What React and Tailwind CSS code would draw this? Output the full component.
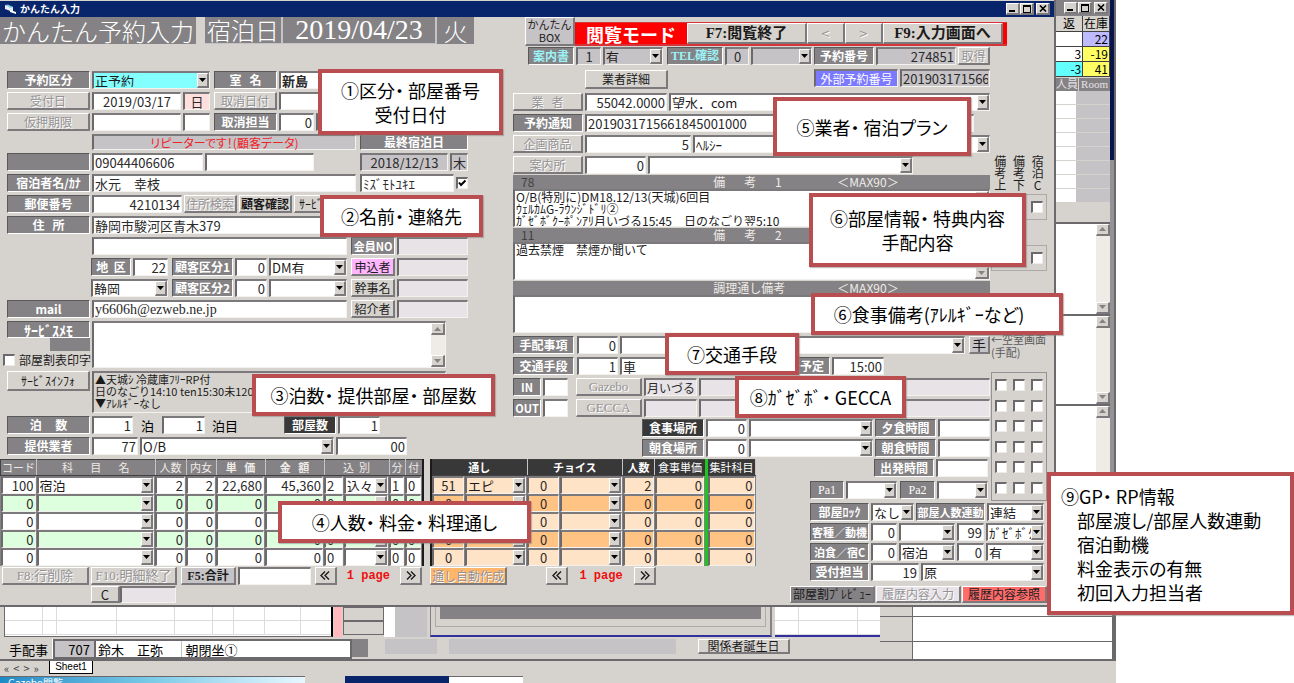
import React from "react";

const inset =
  "border-t-2 border-l-2 border-b border-r border-t-[#7b797b] border-l-[#6b696b] border-b-[#f4f2ee] border-r-[#f4f2ee]";
const raised =
  "border-t border-l border-b-2 border-r-2 border-t-white border-l-white border-b-[#7b797b] border-r-[#7b797b]";
const serif = "[font-family:'Liberation_Serif','Noto_Sans_CJK_JP',serif]";

/* Heading cell; becomes a real label when it names a field. */
function L({ children, className = "", dark, tone = "text-white", size = "text-xs", htmlFor }) {
  const cls = `flex shrink-0 items-center justify-center overflow-hidden whitespace-pre border-t border-l border-b border-r border-t-[#5a595a] border-l-[#5a595a] border-b-white border-r-white ${size} leading-none font-bold ${dark ? "bg-[#393839]" : "bg-[#848284]"} ${tone} ${className}`;
  return htmlFor ? (
    <label htmlFor={htmlFor} className={cls}>{children}</label>
  ) : (
    <div className={cls}>{children}</div>
  );
}

function F({ v = "", className = "", right, bg = "bg-white", size = "text-[13px]", id, name }) {
  return (
    <input
      id={id}
      aria-label={name}
      defaultValue={v}
      className={`h-full min-w-0 rounded-none px-px ${size} leading-none text-[#2b2a2b] outline-none ${inset} ${bg} ${right ? "text-right" : ""} ${className}`}
    />
  );
}

function Tri({ up, tone = "fill-black" }) {
  return (
    <svg viewBox="0 0 7 4" className={`h-1 w-[7px] ${tone}`} aria-hidden="true">
      <polygon points={up ? "0,4 7,4 3.5,0" : "0,0 7,0 3.5,4"} />
    </svg>
  );
}

function S({ v = "", className = "", bg = "bg-white", id, name }) {
  return (
    <div className={`relative h-full min-w-0 ${inset} ${bg} ${className}`}>
      <select
        id={id}
        aria-label={name}
        className="block h-full w-full appearance-none rounded-none bg-transparent pr-3 pl-px text-[13px] leading-none text-[#1c1b1c] outline-none"
      >
        <option>{v}</option>
      </select>
      <span className={`pointer-events-none absolute inset-y-0 right-0 flex w-3 items-center justify-center bg-[#d6d3ce] ${raised}`}>
        <span className="flex shrink-0"><Tri /></span>
      </span>
    </div>
  );
}

function B({ children, className = "", off, bg = "bg-[#d6d3ce]", size = "text-xs", name }) {
  return (
    <button
      type="button"
      aria-label={name}
      className={`flex shrink-0 items-center justify-center overflow-hidden whitespace-pre leading-none ${size} ${raised} ${bg} ${off ? "text-[#949294] [text-shadow:1px_1px_0_#fff]" : "text-[#1c1b1c]"} ${className}`}
    >
      {children}
    </button>
  );
}

function Check({ name, checked }) {
  return (
    <span className="relative flex h-3 w-3 shrink-0">
      <input
        type="checkbox"
        aria-label={name}
        defaultChecked={checked}
        className="h-3 w-3 appearance-none border-t-2 border-l-2 border-r border-b border-t-[#6b696b] border-l-[#6b696b] border-r-[#efece7] border-b-[#efece7] bg-white"
      />
      {checked && (
        <svg viewBox="0 0 12 12" className="pointer-events-none absolute inset-0" aria-hidden="true">
          <path d="M3 5.5 L5 8 L9.5 3.5" fill="none" stroke="#000" strokeWidth="2" />
        </svg>
      )}
    </span>
  );
}

function Row({ children, className = "" }) {
  return <div className={`flex h-[18px] gap-[2px] ${className}`}>{children}</div>;
}

function Memo({ v = "", className = "", bg = "bg-white", size = "text-xs", name, id, bar }) {
  return (
    <div className={`flex ${inset} ${bg} ${className}`}>
      <textarea
        id={id}
        aria-label={name}
        defaultValue={v}
        className={`block h-full min-w-0 flex-1 resize-none overflow-hidden bg-transparent px-px ${size} leading-3 whitespace-pre text-[#1c1b1c] outline-none`}
      />
      {bar && <Scroll />}
    </div>
  );
}

function Scroll() {
  return (
    <div className="flex w-[14px] shrink-0 flex-col justify-between bg-[#efebe7]">
      <B name="上へ" className="h-3 w-[14px]"><Tri up tone="fill-[#848284]" /></B>
      <B name="下へ" className="h-3 w-[14px]"><Tri tone="fill-[#848284]" /></B>
    </div>
  );
}

function WinButtons() {
  return (
    <div className="flex items-center">
      <button type="button" aria-label="最小化" className={`flex h-3 w-[14px] items-end bg-[#d6d3ce] p-px ${raised}`}>
        <span className="ml-px h-[2px] w-[6px] bg-black" />
      </button>
      <button type="button" aria-label="最大化" className={`flex h-3 w-[14px] items-center justify-center bg-[#d6d3ce] ${raised}`}>
        <span className="h-2 w-2 border border-t-2 border-black" />
      </button>
      <button type="button" aria-label="閉じる" className={`ml-[2px] flex h-3 w-[14px] items-center justify-center bg-[#d6d3ce] ${raised}`}>
        <svg viewBox="0 0 8 7" className="h-[7px] w-2 shrink-0" aria-hidden="true">
          <path d="M1 0.5 L7 6.5 M7 0.5 L1 6.5" stroke="#000" strokeWidth="1.6" />
        </svg>
      </button>
    </div>
  );
}

function Callout({ children, className = "" }) {
  return (
    <div className={`absolute flex flex-col items-center justify-center border-4 border-[#b94d4f] bg-white text-lg leading-6 whitespace-pre text-black shadow-[1px_1px_1px_#8888] [font-feature-settings:'palt'] ${className}`}>
      {children}
    </div>
  );
}

function LeftColumn() {
  return (
    <section className="flex min-w-0 flex-[510] flex-col">
      <div className="flex h-[27px] text-2xl leading-none font-light text-white">
        <h1 className="flex w-[196px] items-center justify-center bg-[#848284]">かんたん予約入力</h1>
        <div className="ml-[9px] flex w-[78px] items-center justify-center border-r-2 border-b border-[#c6c3c6] bg-[#848284]">宿泊日</div>
        <div className={`flex w-[154px] items-center justify-center border-r-2 border-b border-[#c6c3c6] bg-[#848284] ${serif} text-[28px]`}>2019/04/23</div>
        <div className="flex w-[37px] items-center justify-center bg-[#848284]">火</div>
      </div>

      <div className="mt-[27px] ml-[7px] flex flex-col gap-[3px] pr-[42px]">
        <Row>
          <L htmlFor="kubun" className="w-[83px]">予約区分</L>
          <S id="kubun" v="正予約" bg="bg-[#84ffff]" className="w-[118px]" />
          <L htmlFor="room" className="ml-[2px] w-[63px]">室   名</L>
          <F id="room" v="新島" className="flex-1 font-bold" />
        </Row>
        <Row>
          <B off className="w-[83px]">受付日</B>
          <F name="受付日" v="2019/03/17" className="w-[89px] text-center" />
          <F name="曜日" v="日" bg="bg-[#ffdfde]" className="w-[27px] text-center" />
          <B off className="ml-[2px] w-[63px]">取消日付</B>
          <F name="取消日付" className="flex-1" />
        </Row>
        <Row>
          <B off className="w-[83px]">仮押期限</B>
          <F name="仮押期限" className="w-[89px]" />
          <F name="仮押曜日" className="w-[27px]" />
          <L htmlFor="cancel" className="ml-[2px] w-[63px]">取消担当</L>
          <F id="cancel" v="0" right className="w-[35px]" />
          <F name="取消担当名" className="flex-1" />
        </Row>
        <div className="flex h-4 items-stretch">
          <div className={`ml-[85px] flex flex-1 items-center justify-center bg-[#c6c3c6] text-xs leading-none text-[#ef2429] [font-feature-settings:'palt'] ${inset}`}>リピーターです！(顧客データ)</div>
          <L className="ml-1 w-[108px]">最終宿泊日</L>
        </div>
        <Row>
          <L className="w-[83px]" />
          <F name="電話番号" v="09044406606" className="w-[111px]" />
          <F name="電話番号2" className="w-[109px]" />
          <div className="flex-1" />
          <F name="最終宿泊日" v="2018/12/13" bg="bg-[#c6c3c6]" className="w-[88px] text-center" />
          <F name="最終曜日" v="木" bg="bg-[#c6c3c6]" className="w-[18px]" />
        </Row>
        <Row>
          <L htmlFor="guest" className="w-[83px]">宿泊者名/ｶﾅ</L>
          <F id="guest" v="水元　幸枝" className="flex-1" />
          <F name="カナ" v="ﾐｽﾞﾓﾄﾕｷｴ" className="ml-[2px] w-[94px]" />
          <div className="flex w-3 items-center"><Check name="カナ確認" checked /></div>
        </Row>
        <Row>
          <L htmlFor="zip" className="w-[83px]">郵便番号</L>
          <F id="zip" v="4210134" right className="w-[90px]" />
          <B off className="w-[53px]">住所検索</B>
          <B className="w-[53px] font-bold">顧客確認</B>
          <B className="w-[53px] justify-start pl-1">ｻｰﾋﾞｽ</B>
        </Row>
        <Row>
          <L htmlFor="addr" className="w-[83px]">住   所</L>
          <F id="addr" v="静岡市駿河区青木379" className="flex-1" />
        </Row>
        <Row>
          <F name="住所2" className="ml-[85px] flex-1" />
          <L htmlFor="member" size="text-[11px]" className="ml-[2px] w-[44px]">会員NO</L>
          <F id="member" bg="bg-[#e7e3e7]" className="w-[71px]" />
        </Row>
        <Row>
          <L htmlFor="area" className="ml-[84px] w-[40px]">地  区</L>
          <F id="area" v="22" right className="w-[35px]" />
          <L htmlFor="cls1" className="ml-[2px] w-[61px]">顧客区分1</L>
          <F id="cls1" v="0" right className="w-[32px]" />
          <S name="顧客区分1名" v="DM有" className="flex-1" />
          <B bg="bg-[#ffb6ff]" className="ml-[2px] w-[44px]">申込者</B>
          <F name="申込者" bg="bg-[#e7e3e7]" className="w-[71px]" />
        </Row>
        <Row>
          <S name="地区名" v="静岡" className="ml-[84px] w-[77px]" />
          <L htmlFor="cls2" className="ml-[2px] w-[61px]">顧客区分2</L>
          <F id="cls2" v="0" right className="w-[32px]" />
          <S name="顧客区分2名" className="flex-1" />
          <B className="ml-[2px] w-[44px]">幹事名</B>
          <F name="幹事名" bg="bg-[#e7e3e7]" className="w-[71px]" />
        </Row>
        <Row>
          <L htmlFor="mail" className="w-[83px]">mail</L>
          <F id="mail" v="y6606h@ezweb.ne.jp" size="text-sm" className={`flex-1 ${serif}`} />
          <B className="ml-[2px] w-[44px]">紹介者</B>
          <F name="紹介者" bg="bg-[#e7e3e7]" className="w-[71px]" />
        </Row>
        <div className="mr-[22px] flex h-[47px] gap-[2px]">
          <div className="-ml-1 flex w-[87px] flex-col">
            <L htmlFor="smemo" size="text-sm" className="ml-1 h-[17px]">ｻｰﾋﾞｽﾒﾓ</L>
            <div className="ml-auto h-[13px] w-[40px] bg-[#848284]" />
            <label className="flex h-[17px] items-center gap-1 text-xs leading-none whitespace-nowrap text-[#1c1b1c]">
              <Check name="部屋割表印字" />
              <span>部屋割表印字</span>
            </label>
          </div>
          <Memo id="smemo" bar className="flex-1" />
        </div>
        <div className="mr-[22px] flex h-[42px] gap-[2px]">
          <B className="h-5 w-[83px]">ｻｰﾋﾞｽｲﾝﾌｫ</B>
          <Memo name="サービスインフォ" bg="bg-[#d6d3ce]" size="text-[11px]" className="flex-1" v={"▲天城ｼ 冷蔵庫ﾌﾘｰRP付\n日のなごり14:10 ten15:30未120分\n▼ｱﾚﾙｷﾞｰなし"} />
        </div>
        <Row>
          <L htmlFor="nights" className="w-[83px]">泊     数</L>
          <F id="nights" v="1" right className="w-[41px]" />
          <span className="w-[25px] self-center text-center text-[13px] leading-none">泊</span>
          <F name="泊目" v="1" right className="w-[43px]" />
          <span className="w-[36px] self-center text-center text-[13px] leading-none">泊目</span>
          <div className="flex-1" />
          <L htmlFor="rooms" dark className="w-[52px]">部屋数</L>
          <F id="rooms" v="1" right className="mr-[88px] w-[42px]" />
        </Row>
        <Row className="mr-[61px]">
          <L htmlFor="vendor" className="w-[83px]">提供業者</L>
          <F id="vendor" v="77" right className="w-[46px]" />
          <S name="提供業者名" v="O/B" className="flex-1" />
          <F name="業者枝番" v="00" right className="w-[71px]" />
        </Row>
      </div>
    </section>
  );
}

function CheckTriple({ label }) {
  return (
    <div className="flex justify-around">
      <Check name={`${label} 備考上`} />
      <Check name={`${label} 備考下`} />
      <Check name={`${label} 宿泊C`} />
    </div>
  );
}

function RemarkBar({ count, title, max, className = "" }) {
  return (
    <div className={`flex h-[14px] items-center bg-[#848284] text-xs leading-none text-[#efebe7] ${className}`}>
      <span className="w-[42%] pl-2 text-[#424142]">{count}</span>
      <span className="w-[26%] whitespace-pre">{title}</span>
      {max && <span>＜MAX90＞</span>}
    </div>
  );
}

function RightColumn() {
  return (
    <section className="flex min-w-0 flex-[537] flex-col">
      <div className="flex h-[30px] pl-3">
        <button type="button" className={`h-[29px] w-[50px] shrink-0 bg-[#c6c3c6] text-center text-[11px] leading-[13px] whitespace-nowrap text-[#1c1b1c] ${raised}`}>
          かんたん<br />BOX
        </button>
        <div className="mt-[5px] mr-[43px] flex h-[24px] flex-1 border-t border-b-2 border-[#d63439] bg-[#ff0000] pr-1">
          <div className="flex w-[112px] items-center justify-center text-lg leading-none font-bold text-white">閲覧モード</div>
          <B className={`min-w-0 flex-1 font-bold ${serif}`} size="text-[15px]">F7:閲覧終了</B>
          <B off size="text-sm" className="w-[38px]">&lt;</B>
          <B off size="text-sm" className="w-[38px]">&gt;</B>
          <B className={`min-w-0 flex-1 font-bold ${serif}`} size="text-[15px]">F9:入力画面へ</B>
        </div>
      </div>
      <Row className="mr-[60px] pl-[15px]">
        <L htmlFor="guide" tone="text-[#9cf3f7]" className="w-[46px]">案内書</L>
        <F id="guide" v="1" bg="bg-[#c6c3c6]" className="w-[25px] text-center" />
        <S name="案内書有無" v="有" bg="bg-[#c6c3c6]" className="w-[60px]" />
        <L htmlFor="tel" tone="text-[#9cf3f7]" className={`ml-[2px] w-[56px] ${serif}`}>TEL確認</L>
        <F id="tel" v="0" bg="bg-[#c6c3c6]" className="w-[24px] text-center" />
        <S name="TEL確認状況" bg="bg-[#c6c3c6]" className="w-[61px]" />
        <L htmlFor="rsv" className="w-[60px]">予約番号</L>
        <F id="rsv" v="274851" right bg="bg-[#c6c3c6]" className="flex-1" />
        <B off className="w-[32px]">取得</B>
      </Row>
      <div className="mr-[60px] mt-1 flex h-[20px] pl-[72px]">
        <B className="h-[19px] w-[83px] self-end">業者詳細</B>
        <div className="flex-1" />
        <label htmlFor="ext" className={`mr-[2px] flex h-[18px] w-[84px] items-center justify-center bg-[#7b79ff] text-xs leading-none text-white ${inset}`}>外部予約番号</label>
        <div className="h-[18px] w-[90px]"><F id="ext" v="201903171566184" bg="bg-[#c6c3c6]" className="block w-full" /></div>
      </div>

      <div className="mt-[4px] flex">
        <div className="flex min-w-0 flex-1 flex-col">
          <div className="flex flex-col gap-[3px]">
            <Row>
              <B off className="w-[70px]">業   者</B>
              <F name="業者番号" v="55042.0000" right className="w-[82px]" />
              <S name="業者名" v="望水．com" className="flex-1" />
            </Row>
            <Row className="mr-[16px]">
              <L htmlFor="notice" className="w-[70px]">予約通知</L>
              <F id="notice" v="2019031715661845001000" className="flex-1" />
            </Row>
            <Row>
              <B off className="w-[70px]">企画商品</B>
              <F name="企画商品番号" v="5" right className="w-[106px]" />
              <S name="企画商品名" v="ﾍﾙｼｰ" className="flex-1" />
            </Row>
            <Row className="mr-[77px]">
              <B off className="w-[70px]">案内所</B>
              <F name="案内所番号" v="0" right className="w-[61px]" />
              <S name="案内所名" className="flex-1" />
            </Row>
          </div>
          <RemarkBar max className="mt-px" count="78" title="備       考       1" />
          <Memo name="備考1" bar className="h-[38px]" v={"O/B(特別に)DM18.12/13(天城)6回目\nｳｪﾙｶﾑG-ﾗｳﾝｼﾞﾄﾞﾘ②\nｶﾞｾﾞﾎﾞｸｰﾎﾟﾝｱﾘ月いづる15:45　日のなごり翌5:10"} />
          <RemarkBar className="mt-px" count="11" title="備       考       2" />
          <Memo name="備考2" bar className="h-[38px]" v="過去禁煙　禁煙か聞いて" />
          <RemarkBar max className="mt-px" title="調理通し備考" />
          <Memo name="調理通し備考" className="h-[38px]" />
          <div className="mt-[3px] flex flex-col gap-[3px]">
            <Row>
              <L htmlFor="arr" className="w-[61px]">手配事項</L>
              <F id="arr" v="0" right className="ml-px w-[41px]" />
              <S name="手配事項名" className="flex-1" />
              <B bg="bg-[#c6c3c6]" size="text-sm" className="ml-[2px] w-[21px]">手</B>
            </Row>
            <Row>
              <L htmlFor="trans" className="w-[61px]">交通手段</L>
              <F id="trans" v="1" right className="ml-px w-[41px]" />
              <F name="交通手段名" v="車" className="flex-1" />
              <L htmlFor="eta" className="w-[60px]">到着予定</L>
              <F id="eta" v="15:00" right className="mr-[106px] w-[52px]" />
            </Row>
            <Row>
              <L htmlFor="in" size="text-[11px]" className="w-[28px]">IN</L>
              <F id="in" className="w-[25px]" />
              <B off size="text-[13px]" className={`ml-[6px] w-[66px] ${serif}`}>Gazebo</B>
              <F name="Gazebo" v="月いづる" size="text-xs" bg="bg-[#e7e3e7]" className="w-[53px]" />
              <F name="Gazebo2" bg="bg-[#e7e3e7]" className="flex-1" />
            </Row>
            <Row>
              <L htmlFor="out" size="text-[11px]" className="w-[28px]">OUT</L>
              <F id="out" className="w-[25px]" />
              <B off size="text-[13px]" className={`ml-[6px] w-[66px] ${serif}`}>GECCA</B>
              <F name="GECCA" bg="bg-[#e7e3e7]" className="w-[53px]" />
              <F name="GECCA2" bg="bg-[#e7e3e7]" className="flex-1" />
            </Row>
          </div>
          <div className="mt-[2px] flex flex-col gap-[2px] pl-[129px]">
            <Row>
              <L htmlFor="din" dark className="w-[62px]">食事場所</L>
              <F id="din" v="0" right className="w-[41px]" />
              <S name="食事場所名" className="flex-1" />
              <L htmlFor="dint" className="w-[61px]">夕食時間</L>
              <F id="dint" className="w-[52px]" />
            </Row>
            <Row>
              <L htmlFor="bf" className="w-[62px]">朝食場所</L>
              <F id="bf" v="0" right className="w-[41px]" />
              <S name="朝食場所名" className="flex-1" />
              <L htmlFor="bft" className="w-[61px]">朝食時間</L>
              <F id="bft" className="w-[52px]" />
            </Row>
          </div>
        </div>

        <aside className="-mb-12 ml-px flex w-[59px] flex-col pr-[3px] text-[#1c1b1c]">
          <div className="mt-[62px] flex h-[36px] justify-around text-xs leading-3">
            <span className="w-3">備考上</span>
            <span className="w-3">備考下</span>
            <span className="w-3 text-center">宿泊C</span>
          </div>
          <div className="mt-[3px] flex h-[26px] flex-col justify-center border border-[#adaaa5]"><CheckTriple label="備考1" /></div>
          <div className="mt-[25px] flex h-[26px] flex-col justify-center border border-[#adaaa5]"><CheckTriple label="備考2" /></div>
          <div className="mt-[62px] h-[26px] text-[11px] leading-[13px] whitespace-nowrap text-[#5a595a]">←空室画面<br />(手配)</div>
          <div className="mt-[13px] flex h-[129px] flex-col justify-around border border-[#949294] py-[2px]">
            {[1, 2, 3, 4, 5, 6].map((n) => <CheckTriple key={n} label={`区分${n}`} />)}
          </div>
        </aside>
      </div>
    </section>
  );
}

const feeRows = [
  ["100", "宿泊", "2", "2", "22,680", "45,360", "2", "込々", "1", "0"],
  ["0", "", "0", "0", "0", "0", "0", "", "0", "0"],
  ["0", "", "0", "0", "0", "0", "0", "", "0", "0"],
  ["0", "", "0", "0", "0", "0", "0", "", "0", "0"],
  ["0", "", "0", "0", "0", "0", "0", "", "0", "0"],
];
const feeCols = ["コード", "科目名", "人数", "内女", "単価", "金額", "込別", "込別名", "分", "付"];

function Th({ children, span, className = "" }) {
  return (
    <th colSpan={span} className={`h-[16px] overflow-hidden border border-[#424142] border-r-[#c6c3c6] p-0 text-[11px] leading-none whitespace-pre ${className}`}>
      {children}
    </th>
  );
}

function FeeTable() {
  return (
    <table className="w-full table-fixed border-collapse border-r-2 border-[#1c1b1c] bg-[#848284]">
      <colgroup>
        <col className="w-[36px]" /><col /><col className="w-[31px]" /><col className="w-[30px]" />
        <col className="w-[49px]" /><col className="w-[59px]" /><col className="w-[20px]" />
        <col className="w-[45px]" /><col className="w-[16px]" /><col className="w-[18px]" />
      </colgroup>
      <thead>
        <tr className="text-[#efebe7]">
          <Th className="font-normal">コード</Th><Th className="font-normal">科       目       名</Th><Th className="font-normal">人数</Th>
          <Th className="font-normal">内女</Th><Th>単   価</Th><Th>金   額</Th><Th span={2} className="font-normal">込  別</Th>
          <Th className="font-normal">分</Th><Th className="font-normal">付</Th>
        </tr>
      </thead>
      <tbody>
        {feeRows.map((r, i) => {
          const bg = i % 2 ? "bg-[#deffde]" : "bg-white";
          return (
            <tr key={i}>
              {r.map((c, j) => (
                <td key={j} className="h-[18px] p-0">
                  <div className="h-[18px] pr-px">
                    {j === 1 || j === 7 ? (
                      <S name={`${feeCols[j]} ${i + 1}`} v={c} bg={bg} />
                    ) : (
                      <F name={`${feeCols[j]} ${i + 1}`} v={c} bg={bg} right={j < 6} className="block w-full" />
                    )}
                  </div>
                </td>
              ))}
            </tr>
          );
        })}
      </tbody>
    </table>
  );
}

const mealRows = [["51", "エピ", "0", "", "2", "0", "0"], ...Array(4).fill(["0", "", "0", "", "0", "0", "0"])];
const mealCols = ["通しコード", "通し", "チョイスコード", "チョイス", "通し人数", "食事単価", "集計科目"];

function MealTable() {
  return (
    <table className="w-full table-fixed border-collapse border-l-2 border-[#1c1b1c] bg-[#848284]">
      <colgroup>
        <col className="w-[34px]" /><col className="w-[62px]" /><col className="w-[33px]" /><col />
        <col className="w-[32px]" /><col className="w-[52px]" /><col className="w-[49px]" />
      </colgroup>
      <thead>
        <tr className="bg-[#393839] text-white">
          <Th span={2}>通し</Th><Th span={2}>チョイス</Th><Th>人数</Th>
          <Th className="font-normal">食事単価</Th><Th className="border-l-3 border-l-[#21c321] font-normal">集計科目</Th>
        </tr>
      </thead>
      <tbody>
        {mealRows.map((r, i) => {
          const bg = i % 2 ? "bg-[#ffc384]" : "bg-[#ffe3c6]";
          return (
            <tr key={i}>
              {r.map((c, j) => (
                <td key={j} className={`h-[18px] p-0 ${j === 6 ? "border-l-3 border-[#21c321]" : ""}`}>
                  <div className="h-[18px] pr-px">
                    {j === 1 || j === 3 ? (
                      <S name={`${mealCols[j]} ${i + 1}`} v={c} bg={bg} />
                    ) : (
                      <F name={`${mealCols[j]} ${i + 1}`} v={c} bg={bg} right={j > 3} className={`block w-full ${j < 3 ? "text-center" : ""}`} />
                    )}
                  </div>
                </td>
              ))}
            </tr>
          );
        })}
      </tbody>
    </table>
  );
}

function Chevrons({ next }) {
  return (
    <svg viewBox="0 0 10 9" className="h-[9px] w-[10px]" aria-hidden="true">
      <path
        d={next ? "M1 0.5 L5 4.5 L1 8.5 M5 0.5 L9 4.5 L5 8.5" : "M5 0.5 L1 4.5 L5 8.5 M9 0.5 L5 4.5 L9 8.5"}
        fill="none"
        stroke="#1c1b1c"
        strokeWidth="1.4"
      />
    </svg>
  );
}

function Pager() {
  return (
    <>
      <B name="前のページ" className="w-[22px]"><Chevrons /></B>
      <span className="w-[62px] self-center text-center text-xs leading-none font-bold text-[#ef1010] [font-family:'Liberation_Mono',monospace]">1 page</span>
      <B name="次のページ" className="w-[22px]"><Chevrons next /></B>
    </>
  );
}

function LowerArea() {
  return (
    <div className="mt-[2px] mr-[7px] flex pb-[2px]">
      <section className="min-w-0 flex-[424]">
        <FeeTable />
        <Row className="mt-px pr-[2px] pl-[2px]">
          <B off className={`w-[87px] ${serif}`} size="text-[13px]">F8:行削除</B>
          <B off className={`w-[86px] ${serif}`} size="text-[13px]">F10:明細終了</B>
          <B className={`ml-[2px] w-[55px] ${serif} font-bold`} bg="bg-[#c6c3c6]">F5:合計</B>
          <F name="合計" className="w-[76px]" />
          <div className="flex-1" />
          <Pager />
        </Row>
        <div className="mt-px flex h-[17px] pl-[91px]">
          <B className="w-[29px]" size="text-[13px]">C</B>
          <F name="C" bg="bg-[#e7e3e7]" className="w-[56px]" />
        </div>
      </section>
      <section className="ml-[6px] min-w-0 flex-[326]">
        <MealTable />
        <Row className="mt-px">
          <B off bg="bg-[#ffb66b]" className="w-[77px] text-[#94714a]">通し自動作成</B>
          <div className="flex-1" />
          <Pager />
          <div className="w-[98px]" />
        </Row>
      </section>
      <section className="ml-[34px] flex w-[257px] shrink-0 flex-col">
        <Row className="pl-[84px]">
          <L htmlFor="dep" className="w-[60px]">出発時間</L>
          <F id="dep" className="w-[52px]" />
        </Row>
        <Row className="mt-1 pl-[20px]">
          <L htmlFor="pa1" className={`w-[34px] font-normal ${serif}`}>Pa1</L>
          <S id="pa1" className="w-[51px]" />
          <L htmlFor="pa2" className={`ml-px w-[35px] font-normal ${serif}`}>Pa2</L>
          <S id="pa2" className="w-[51px]" />
        </Row>
        <div className="mt-1 mr-[3px] flex flex-col gap-[2px] pl-[20px]">
          <Row>
            <L htmlFor="lock" className="w-[59px]">部屋ﾛｯｸ</L>
            <S id="lock" v="なし" className="w-[43px]" />
            <L htmlFor="link" size="text-[11px]" className="w-[69px]">部屋人数連動</L>
            <S id="link" v="連結" className="flex-1" />
          </Row>
          <Row>
            <L htmlFor="kind" size="text-[11px]" className="w-[59px]">客種／動機</L>
            <F id="kind" v="0" right className="w-[26px]" />
            <S name="客種" className="w-[56px]" />
            <F name="動機番号" v="99" right className="w-[27px]" />
            <S name="動機" v="ｶﾞｾﾞﾎﾞｸ" className="flex-1" />
          </Row>
          <Row>
            <L htmlFor="meal" size="text-[11px]" className="w-[59px]">泊食／宿C</L>
            <F id="meal" v="0" right className="w-[26px]" />
            <S name="泊食" v="宿泊" className="w-[56px]" />
            <F name="宿C番号" v="0" right className="w-[27px]" />
            <S name="宿C" v="有" className="flex-1" />
          </Row>
          <Row>
            <L htmlFor="staff" className="w-[59px]">受付担当</L>
            <F id="staff" v="19" right className="w-[48px]" />
            <S name="受付担当名" v="原" className="flex-1" />
          </Row>
        </div>
        <div className="mt-[5px] flex h-[17px] gap-px">
          <B bg="bg-[#848284]" className="w-[85px]">部屋割ﾌﾟﾚﾋﾞｭｰ</B>
          <B off bg="bg-[#e7e3e7]" className="w-[85px]">履歴内容入力</B>
          <B bg="bg-[#ff6d6b]" className="w-[85px]">履歴内容参照</B>
        </div>
      </section>
    </div>
  );
}

function MainWindow() {
  return (
    <main className="min-w-0 flex-1 border-r-2 border-b-2 border-[#6b696b] bg-[#d6d3ce]">
      <header className="flex h-[17px] items-center justify-between border-t border-[#d6d3ce] bg-[#08246b] pr-1 pl-[5px]">
        <div className="flex items-center gap-1 text-[10px] leading-none font-bold text-white">
          <svg viewBox="0 0 11 10" className="h-[10px] w-[11px]" aria-hidden="true">
            <path d="M0 1 L8 3 L8 8 L0 5 Z" fill="#e8eef8" />
            <path d="M0 1 L3 0.5 L8 3 L6 4 Z" fill="#7cc7d8" />
            <path d="M5 6 L11 8 L11 10 L5 8 Z" fill="#fff" />
          </svg>
          <span>かんたん入力</span>
        </div>
        <WinButtons />
      </header>
      <div className="flex">
        <LeftColumn />
        <div className="w-[3px]" />
        <RightColumn />
        <div className="w-1" />
      </div>
      <LowerArea />
    </main>
  );
}

function StockStrip() {
  const cell = "h-[15px] border-r border-b border-[#424142] p-0 pr-px text-right text-xs leading-none";
  return (
    <aside className="flex w-[60px] shrink-0 border-r-2 border-[#6b696b]">
      <div className="flex min-w-0 flex-1 flex-col">
        <div className="flex h-[16px] items-center justify-end bg-[#848284] pr-[2px]"><WinButtons /></div>
        <table className="w-full table-fixed border-collapse">
          <thead>
            <tr>
              <th className="h-[15px] border-r border-b border-[#424142] p-0 text-center text-xs leading-none font-normal">返</th>
              <th className="h-[15px] border-r border-b border-[#424142] p-0 text-center text-xs leading-none font-normal">在庫</th>
            </tr>
          </thead>
          <tbody>
            <tr><td className={`${cell} bg-white`} /><td className={`${cell} bg-[#bdbaff]`}>22</td></tr>
            <tr><td className={`${cell} bg-white`}>3</td><td className={`${cell} bg-[#ffff63]`}>-19</td></tr>
            <tr><td className={`${cell} bg-[#63ffff]`}>-3</td><td className={`${cell} bg-[#ffff63]`}>41</td></tr>
          </tbody>
        </table>
        <div className={`mt-px flex h-[13px] gap-px text-[11px] leading-none whitespace-nowrap text-[#e7e3e7] ${serif}`}>
          <span className="flex w-[22px] shrink-0 items-center justify-end bg-[#848284]">人員</span>
          <span className="flex flex-1 items-center justify-center bg-[#848284]">Room</span>
        </div>
        {Array.from({ length: 8 }, (_, i) => (
          <div key={i} className="flex h-[14px]">
            <span className="w-5 border-b border-[#d6d3ce] bg-white" />
            <span className="flex-1 border-b border-[#d6d3ce] bg-[#c6c3c6]" />
          </div>
        ))}
        <div className="h-[19px]" />
        <div className="flex h-[92px] justify-end border-t-2 border-[#6b696b] bg-white"><Scroll /></div>
        <div className="flex h-[90px] justify-end border-t-2 border-[#6b696b] bg-white"><Scroll /></div>
        <div className="flex flex-1 justify-end border-t-2 border-[#6b696b] bg-white"><Scroll /></div>
      </div>
      <div className="flex w-1 flex-col">
        <div className="h-[160px] bg-[#08144a]" />
        <div className="flex-1 bg-[#949294]" />
      </div>
    </aside>
  );
}

function GridCells({ widths }) {
  return (
    <>
      {[0, 1].map((r) => (
        <div key={r} className="flex h-[14px] border-b border-[#dedbde]">
          {widths.map((w, i) => <span key={i} className={`${w} border-r border-[#dedbde]`} />)}
        </div>
      ))}
    </>
  );
}

function BackWindow() {
  return (
    <section className="flex border-r-4 border-[#6b696b] bg-[#d6d3ce]">
      <div className="min-w-0 flex-[878]">
        <div className="flex h-[30px]">
          <div className="ml-1 w-[329px] border-r-2 border-b border-l border-r-black border-b-[#6b696b] border-l-[#6b696b] bg-white">
            <GridCells widths={["w-[38px]", "w-[14px]", "w-[60px]", "w-[58px]", "w-[38px]", "w-[21px]", "w-[31px]", "w-[36px]"]} />
          </div>
          <div className="ml-px w-2 bg-[#ffbabd]" />
          <div className="ml-px flex w-[41px] flex-col">
            <div className="h-[14px] border border-[#6b696b]" />
            <div className="h-[14px] border border-[#6b696b]" />
          </div>
          <div className="w-[11px] bg-white" />
          <div className="w-[32px] bg-[#c6c3c6]" />
          <div className="ml-[3px] flex-1 border-r-2 border-b-2 border-l border-r-[#848284] border-b-[#31309c] border-l-[#848284] px-1 pb-2">
            <div className="h-[20px] border-r border-b border-l border-[#adaaa5] px-1">
              <div className="h-[12px] bg-[#848284]" />
            </div>
          </div>
          <div className="ml-[3px] w-[105px] border-b-2 border-[#31309c] bg-white">
            <GridCells widths={["w-[24px]", "w-[59px]"]} />
          </div>
        </div>
        <div className="mt-[2px] flex h-[20px] items-stretch">
          <div className="flex w-[53px] items-center justify-end border-r border-white pr-1 text-[13px] leading-none">手配事</div>
          <table className="w-[299px] table-fixed border-collapse border-2 border-[#6b696b] bg-white text-[13px] leading-none">
            <tbody>
              <tr>
                <td className="w-[41px] border-r-2 border-[#6b696b] bg-[#c6c3c6] p-0 pr-1 text-right">707</td>
                <td className="w-[86px] border-r border-[#c6c3c6] p-0 pl-[2px]">鈴木　正弥</td>
                <td className="p-0 pl-1">朝閉坐①</td>
              </tr>
            </tbody>
          </table>
          <div className="h-[18px] w-[16px] bg-[#848284]" />
          <div className="ml-[17px] h-[15px] w-[52px] bg-[#c6c3c6]" />
          <div className="ml-3 h-[15px] w-[227px] bg-[#c6c3c6]" />
          <B className="ml-[22px] h-[15px] w-[92px]">関係者誕生日</B>
        </div>
      </div>
      <div className="w-[33px] border-r border-[#6b696b]">
        <div className="h-[10px] border-b border-[#6b696b]" />
        <div className="h-[25px] border-b border-[#6b696b]" />
      </div>
      <div className="flex-[199] bg-white">
        <div className="h-[10px] border-b border-[#6b696b]" />
        <div className="h-[25px] border-b border-[#6b696b]" />
      </div>
    </section>
  );
}

export default function App() {
  return (
    <div className="relative min-h-screen overflow-hidden bg-white text-black [font-family:'Noto_Sans_CJK_JP',sans-serif]">
      <div className="mr-[178px] bg-[#d6d3ce]">
        <div className="flex">
          <MainWindow />
          <StockStrip />
        </div>
        <BackWindow />
        <footer>
          <nav className="flex h-[17px] border-t-2 border-[#6b696b] text-[10px] leading-none" aria-label="シート">
            <span className="flex w-[49px] items-center gap-1 pl-1 text-[11px] text-[#424142]">
              <button type="button">«</button><button type="button">&lt;</button><button type="button">&gt;</button><button type="button">»</button>
            </span>
            <button type="button" className="h-[13px] w-[44px] border border-t-0 border-black bg-white [font-family:'Liberation_Sans',sans-serif]">Sheet1</button>
          </nav>
          <div className="flex h-2">
            <span className="flex h-2 w-[305px] overflow-hidden border-t border-[#6b696b] bg-linear-to-r from-[#1c8ac6] via-[#7bcbe7] to-[#e7f7ff] pl-2 text-[10px] leading-3 text-white">Gazebo閲覧</span>
            <span className="ml-10 w-[104px] bg-[#08246b]" />
            <span className="w-[74px] border-t border-[#6b696b] bg-white" />
          </div>
        </footer>
      </div>

      <Callout className="top-[69px] left-[318px] h-[66px] w-[185px]"><span>①区分・ 部屋番号</span><span>受付日付</span></Callout>
      <Callout className="top-[195px] left-[320px] h-[42px] w-[163px]">②名前・ 連絡先</Callout>
      <Callout className="top-[374px] left-[252px] h-[42px] w-[243px]">③泊数・ 提供部屋・ 部屋数</Callout>
      <Callout className="top-[501px] left-[278px] h-[42px] w-[253px]">④人数・ 料金・ 料理通し</Callout>
      <Callout className="top-[97px] left-[773px] h-[59px] w-[198px]">⑤業者・ 宿泊プラン</Callout>
      <Callout className="top-[193px] left-[809px] h-[74px] w-[217px]"><span>⑥部屋情報・ 特典内容</span><span>手配内容</span></Callout>
      <Callout className="top-[293px] left-[811px] h-[42px] w-[252px] pr-4">⑥食事備考(ｱﾚﾙｷﾞｰなど)</Callout>
      <Callout className="top-[333px] left-[665px] h-[42px] w-[134px]">⑦交通手段</Callout>
      <Callout className="top-[376px] left-[735px] h-[42px] w-[171px]">⑧ｶﾞｾﾞﾎﾞ・ GECCA</Callout>
      <Callout className="top-[472px] left-[1047px] h-[143px] w-[247px]">
        <div className="flex w-full flex-col pl-[10px]">
          <span>⑨GP・ RP情報</span>
          <span className="pl-4">部屋渡し/部屋人数連動</span>
          <span className="pl-4">宿泊動機</span>
          <span className="pl-4">料金表示の有無</span>
          <span className="pl-4">初回入力担当者</span>
        </div>
      </Callout>
    </div>
  );
}
